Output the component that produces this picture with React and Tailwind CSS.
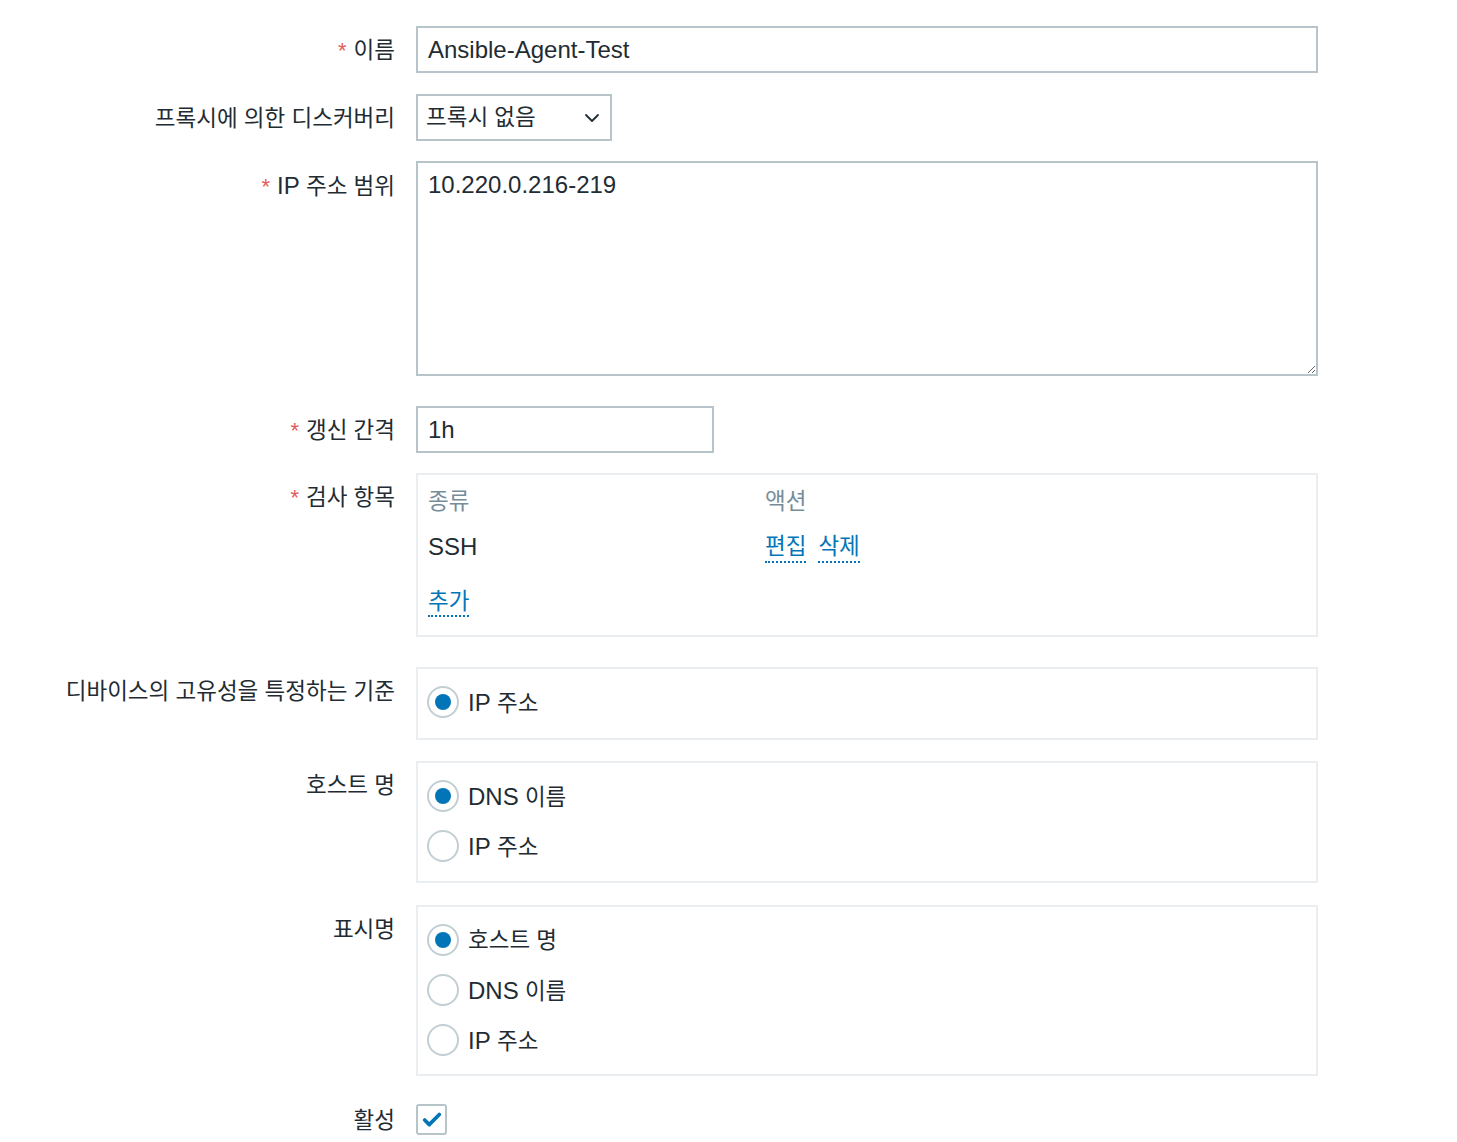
import { ChevronDown, Check } from "lucide-react";

const Label = ({ required, children }) => {
  return (
    <div className="w-[395px] shrink-0 pt-[12px] text-right leading-[26px]">
      {required && <span className="mr-[7px] text-[22px] text-[#e45959]">*</span>}
      {children}
    </div>
  );
};

const L = ({ children }) => <span className="text-[24px]">{children}</span>;

const Row = ({ className = "", children }) => {
  return <div className={"flex gap-[21px] " + className}>{children}</div>;
};

const Radio = ({ checked, label }) => {
  return (
    <div className="flex h-[50px] items-center">
      <span className="flex h-[32px] w-[32px] items-center justify-center rounded-full border-2 border-[#c3ced3] bg-white">
        {checked && <span className="h-[16px] w-[16px] rounded-full bg-[#0275b8]" />}
      </span>
      <span className="ml-[9px] pt-[2px]">{label}</span>
    </div>
  );
};

const LinkText = ({ children }) => {
  return (
    <span className="border-b-2 border-dotted border-[#0275b8] pb-[1px] text-[#0275b8]">{children}</span>
  );
};

export default function App() {
  return (
    <div className="min-h-[1142px] bg-white pt-[26px] text-[22.5px] text-[#1f2c33] font-['Liberation_Sans','Noto_Sans_CJK_KR',sans-serif]">
      {/* 이름 */}
      <Row>
        <Label required>이름</Label>
        <div className="flex h-[47px] w-[902px] items-center border-2 border-[#b7c4ca] px-[10px]">
          <L>Ansible-Agent-Test</L>
        </div>
      </Row>

      {/* 프록시 */}
      <Row className="mt-[21px]">
        <Label>프록시에 의한 디스커버리</Label>
        <div className="flex h-[47px] w-[196px] items-center justify-between border-2 border-[#b7c4ca] pl-[8px] pr-[6px]">
          <span>프록시 없음</span>
          <ChevronDown size={24} strokeWidth={1.8} />
        </div>
      </Row>

      {/* IP 범위 */}
      <Row className="mt-[20px]">
        <Label required>
          <L>IP</L> 주소 범위
        </Label>
        <textarea
          defaultValue="10.220.0.216-219"
          className="h-[215px] w-[902px] resize border-2 border-[#b7c4ca] px-[10px] py-[9px] text-[24px] leading-[26px] outline-none"
        />
      </Row>

      {/* 갱신 간격 */}
      <Row className="mt-[30px]">
        <Label required>갱신 간격</Label>
        <div className="flex h-[47px] w-[298px] items-center border-2 border-[#b7c4ca] px-[10px]">
          <L>1h</L>
        </div>
      </Row>

      {/* 검사 항목 */}
      <Row className="mt-[20px]">
        <Label required>검사 항목</Label>
        <div className="h-[164px] w-[902px] border-2 border-[#ebeef0] px-[10px] pt-[14px]">
          <div className="grid grid-cols-[337px_1fr] leading-[26px]">
            <span className="text-[#768d99]">종류</span>
            <span className="text-[#768d99]">액션</span>
            <span className="mt-[19px]">
              <L>SSH</L>
            </span>
            <span className="mt-[19px] flex gap-[12px]">
              <LinkText>편집</LinkText>
              <LinkText>삭제</LinkText>
            </span>
          </div>
          <div className="mt-[26px] leading-[26px]">
            <LinkText>추가</LinkText>
          </div>
        </div>
      </Row>

      {/* 디바이스 고유성 */}
      <Row className="mt-[30px]">
        <Label>디바이스의 고유성을 특정하는 기준</Label>
        <div className="w-[902px] border-2 border-[#ebeef0] px-[9px] pb-[11px] pt-[8px]">
          <Radio checked label={<><L>IP</L> 주소</>} />
        </div>
      </Row>

      {/* 호스트 명 */}
      <Row className="mt-[21px]">
        <Label>호스트 명</Label>
        <div className="w-[902px] border-2 border-[#ebeef0] px-[9px] pb-[10px] pt-[8px]">
          <Radio checked label={<><L>DNS</L> 이름</>} />
          <Radio label={<><L>IP</L> 주소</>} />
        </div>
      </Row>

      {/* 표시명 */}
      <Row className="mt-[22px]">
        <Label>표시명</Label>
        <div className="w-[902px] border-2 border-[#ebeef0] px-[9px] pb-[9px] pt-[8px]">
          <Radio checked label="호스트 명" />
          <Radio label={<><L>DNS</L> 이름</>} />
          <Radio label={<><L>IP</L> 주소</>} />
        </div>
      </Row>

      {/* 활성 */}
      <Row className="mt-[28px]">
        <div className="w-[395px] shrink-0 pt-[4px] text-right leading-[26px]">활성</div>
        <div className="flex h-[31px] w-[31px] items-center justify-center rounded-[3px] border-2 border-[#b7c4ca]">
          <Check size={22} strokeWidth={4} className="text-[#0275b8]" />
        </div>
      </Row>
    </div>
  );
}
